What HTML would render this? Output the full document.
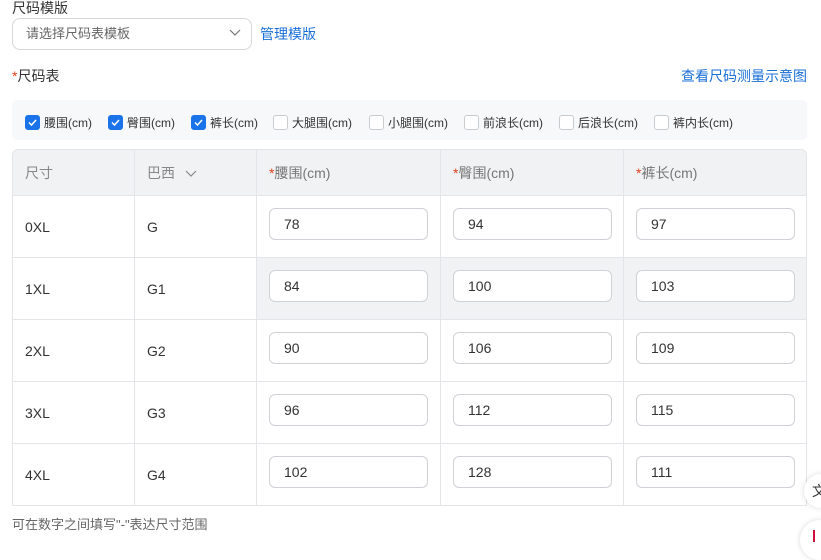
<!DOCTYPE html>
<html><head><meta charset="utf-8"><style>
*{box-sizing:border-box;margin:0;padding:0}
body{width:821px;height:547px;background:#fff;font-family:"Liberation Sans","Noto Sans CJK SC",sans-serif;color:#333;position:relative;overflow:hidden;font-size:14px}
.a{position:absolute}
.blue{color:#1a6fd8}
.star{color:#e0401a}
.sel{left:12px;top:18px;width:240px;height:32px;border:1px solid #d5d7db;border-radius:8px;color:#666;font-size:13px;line-height:30px;padding-left:13px}
.cb{position:absolute;top:115px;width:15px;height:15px;border:1px solid #c8cbd0;border-radius:3px;background:#fff}
.cb.on{background:#1a73e8;border-color:#1a73e8}
.cl{position:absolute;top:115px;font-size:12px;color:#333;line-height:16px}
.tbl{left:12px;top:149px;width:795px;height:357px;border:1px solid #e3e5e8;border-radius:6px 6px 0 0;overflow:hidden}
.hd{position:absolute;left:0;top:0;width:100%;height:46px;background:#f1f2f4;border-bottom:1px solid #e3e5e8}
.vl{position:absolute;top:0;width:1px;height:100%;background:#e3e5e8}
.hl{position:absolute;left:0;width:100%;height:1px;background:#e3e5e8}
.t{position:absolute;font-size:14px;line-height:16px}
.in{position:absolute;width:159px;height:32px;border:1px solid #cfd2d6;border-radius:6px;background:#fff;padding-left:14px;line-height:30px;font-size:14px;color:#333}
</style></head><body>
<div class="a" style="left:12px;top:0;line-height:16px">尺码模版</div>
<div class="a sel">请选择尺码表模板
<svg class="a" style="right:10px;top:10px" width="12" height="8" viewBox="0 0 12 8"><path d="M1 1l5 5 5-5" stroke="#777" fill="none" stroke-width="1.2"/></svg></div>
<div class="a blue" style="left:260px;top:26px;line-height:16px">管理模版</div>
<div class="a" style="left:12px;top:68px;line-height:16px"><span class="star">*</span>尺码表</div>
<div class="a blue" style="left:681px;top:68px;line-height:16px">查看尺码测量示意图</div>
<div class="a" style="left:12px;top:100px;width:795px;height:40px;background:#f7f8fa;border-radius:4px"></div>
<div class="cb on" style="left:25px"><svg width="13" height="13" viewBox="0 0 13 13"><path d="M3 6.5l2.5 2.5 4.5-5" stroke="#fff" stroke-width="1.5" fill="none"/></svg></div><div class="cl" style="left:44px">腰围(cm)</div>
<div class="cb on" style="left:108px"><svg width="13" height="13" viewBox="0 0 13 13"><path d="M3 6.5l2.5 2.5 4.5-5" stroke="#fff" stroke-width="1.5" fill="none"/></svg></div><div class="cl" style="left:127px">臀围(cm)</div>
<div class="cb on" style="left:191px"><svg width="13" height="13" viewBox="0 0 13 13"><path d="M3 6.5l2.5 2.5 4.5-5" stroke="#fff" stroke-width="1.5" fill="none"/></svg></div><div class="cl" style="left:210px">裤长(cm)</div>
<div class="cb" style="left:273px"></div><div class="cl" style="left:292px">大腿围(cm)</div>
<div class="cb" style="left:369px"></div><div class="cl" style="left:388px">小腿围(cm)</div>
<div class="cb" style="left:464px"></div><div class="cl" style="left:483px">前浪长(cm)</div>
<div class="cb" style="left:559px"></div><div class="cl" style="left:578px">后浪长(cm)</div>
<div class="cb" style="left:654px"></div><div class="cl" style="left:673px">裤内长(cm)</div>

<div class="a tbl">
<div class="hd"></div>
<div class="a" style="left:244px;top:107px;width:551px;height:62px;background:#f1f2f4"></div>
<div class="hl" style="top:107px"></div><div class="hl" style="top:169px"></div><div class="hl" style="top:231px"></div><div class="hl" style="top:293px"></div>
<div class="vl" style="left:121px"></div><div class="vl" style="left:243px"></div><div class="vl" style="left:427px"></div><div class="vl" style="left:610px"></div>
<div class="t" style="left:12px;top:15px;color:#888">尺寸</div>
<div class="t" style="left:134px;top:15px;color:#888">巴西 <svg width="12" height="8" viewBox="0 0 12 8" style="margin-left:6px"><path d="M1 1l5 5 5-5" stroke="#888" fill="none" stroke-width="1.2"/></svg></div>
<div class="t" style="left:256px;top:15px;color:#777"><span class="star">*</span>腰围(cm)</div>
<div class="t" style="left:440px;top:15px;color:#777"><span class="star">*</span>臀围(cm)</div>
<div class="t" style="left:623px;top:15px;color:#777"><span class="star">*</span>裤长(cm)</div>

<div class="t" style="left:12px;top:69px">0XL</div><div class="t" style="left:134px;top:69px">G</div>
<div class="in" style="left:256px;top:58px">78</div><div class="in" style="left:440px;top:58px">94</div><div class="in" style="left:623px;top:58px">97</div>
<div class="t" style="left:12px;top:131px">1XL</div><div class="t" style="left:134px;top:131px">G1</div>
<div class="in" style="left:256px;top:120px">84</div><div class="in" style="left:440px;top:120px">100</div><div class="in" style="left:623px;top:120px">103</div>
<div class="t" style="left:12px;top:193px">2XL</div><div class="t" style="left:134px;top:193px">G2</div>
<div class="in" style="left:256px;top:182px">90</div><div class="in" style="left:440px;top:182px">106</div><div class="in" style="left:623px;top:182px">109</div>
<div class="t" style="left:12px;top:255px">3XL</div><div class="t" style="left:134px;top:255px">G3</div>
<div class="in" style="left:256px;top:244px">96</div><div class="in" style="left:440px;top:244px">112</div><div class="in" style="left:623px;top:244px">115</div>
<div class="t" style="left:12px;top:317px">4XL</div><div class="t" style="left:134px;top:317px">G4</div>
<div class="in" style="left:256px;top:306px">102</div><div class="in" style="left:440px;top:306px">128</div><div class="in" style="left:623px;top:306px">111</div>
</div>
<div class="a" style="left:12px;top:517px;font-size:13px;color:#666;line-height:16px">可在数字之间填写"-"表达尺寸范围</div>
<div class="a" style="left:804px;top:474px;width:34px;height:34px;border-radius:50%;background:#fff;box-shadow:0 0 6px rgba(0,0,0,.15);font-size:14px;line-height:34px;padding-left:8px">文</div>
<div class="a" style="left:800px;top:520px;width:40px;height:40px;border-radius:50%;background:#fff;box-shadow:0 0 6px rgba(0,0,0,.15)"><div class="a" style="left:13px;top:10px;width:6px;height:12px;border-left:2px solid #d0103a"></div></div>
</body></html>
